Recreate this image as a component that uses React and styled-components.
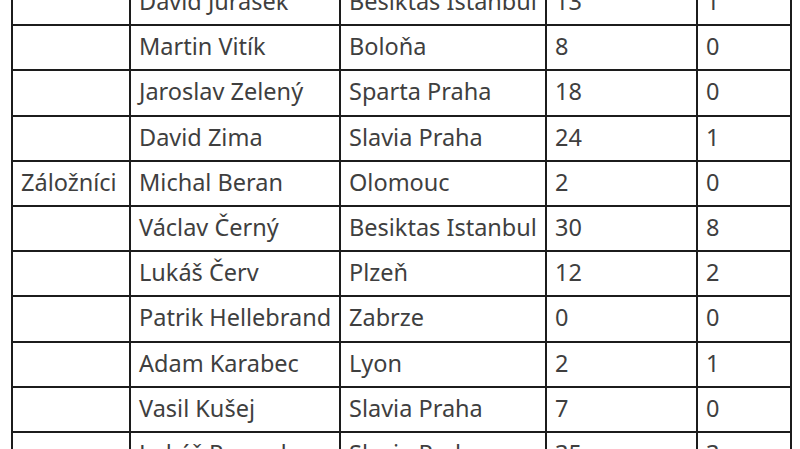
import React from "react";
import styled, { createGlobalStyle } from "styled-components";

const Global = createGlobalStyle`
  html, body { margin: 0; padding: 0; background: #fff; }
  body { font-family: "Noto Sans", "Open Sans", sans-serif; }
`;

const Viewport = styled.div`
  height: 449px;
  overflow: hidden;
  padding-left: 11px;
`;

const Table = styled.table`
  border-collapse: collapse;
  table-layout: fixed;
  width: 779px;
  margin-top: -21px;
  color: #3f3f3f;
  font-size: 23.5px;
`;

const Cell = styled.td`
  border: 2px solid #1c1c1c;
  height: 40.2px;
  padding: 0 0 3px 8px;
  vertical-align: middle;
  white-space: nowrap;
  overflow: hidden;
  line-height: 28px;
`;

const widths = [118, 210, 206, 151, 94];

const rows = [
  ["", "David Jurásek", "Besiktas Istanbul", "13", "1"],
  ["", "Martin Vitík", "Boloňa", "8", "0"],
  ["", "Jaroslav Zelený", "Sparta Praha", "18", "0"],
  ["", "David Zima", "Slavia Praha", "24", "1"],
  ["Záložníci", "Michal Beran", "Olomouc", "2", "0"],
  ["", "Václav Černý", "Besiktas Istanbul", "30", "8"],
  ["", "Lukáš Červ", "Plzeň", "12", "2"],
  ["", "Patrik Hellebrand", "Zabrze", "0", "0"],
  ["", "Adam Karabec", "Lyon", "2", "1"],
  ["", "Vasil Kušej", "Slavia Praha", "7", "0"],
  ["", "Lukáš Provod", "Slavia Praha", "35", "3"],
];

export default function App() {
  return (
    <>
      <Global />
      <Viewport>
        <Table>
          <colgroup>
            {widths.map((w, i) => (
              <col key={i} style={{ width: w }} />
            ))}
          </colgroup>
          <tbody>
            {rows.map((r, i) => (
              <tr key={i}>
                {r.map((c, j) => (
                  <Cell key={j}>{c}</Cell>
                ))}
              </tr>
            ))}
          </tbody>
        </Table>
      </Viewport>
    </>
  );
}
